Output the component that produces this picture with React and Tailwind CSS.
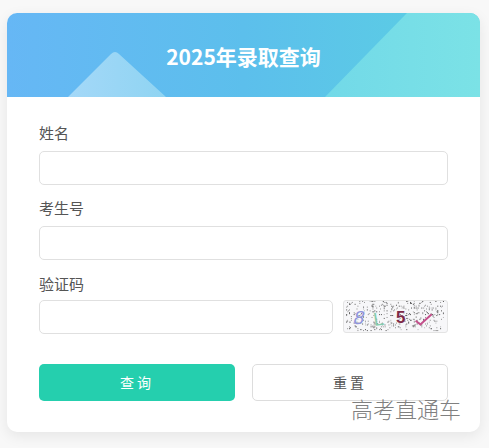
import React from 'react';

const cjk = '"Noto Sans CJK SC", "Liberation Sans", sans-serif';

// fixed pseudo random noise for the captcha picture
const noise = [];
let seed = 7;
for (let i = 0; i < 380; i++) {
  seed = (seed * 7919 + 13) % 10007;
  const x = seed % 104;
  seed = (seed * 7919 + 13) % 10007;
  const y = seed % 32;
  noise.push([x, y]);
}

const Captcha = () => (
  <svg width="105" height="33" viewBox="0 0 105 33" className="block shrink-0 rounded-[3px] border border-[#e4e4e4] bg-[#f7f7f9]">
    {noise.map(([x, y], i) => (
      <rect key={i} x={x} y={y} width="1" height="1" fill={i % 3 === 0 ? '#777777' : '#222222'} opacity={i % 2 === 0 ? 0.85 : 0.55} />
    ))}
    <text x="7" y="25" fontSize="20" fontFamily="Liberation Sans" fill="#8f95dc" transform="skewX(-14) translate(6 0)">8</text>
    <text x="29" y="26" fontSize="20" fontFamily="Liberation Sans" fill="#86cdae" transform="rotate(-8 33 20)">L</text>
    <text x="53" y="23" fontSize="18" fontWeight="bold" fontFamily="Liberation Sans" fill="#7d2a48">5</text>
    <path d="M74 21 L79 25 L91 14" fill="none" stroke="#c4508c" strokeWidth="2.2" />
  </svg>
);

const Field = ({ label, className }) => (
  <div className={className}>
    <label className="block text-[15px] leading-[22px] text-[#555555]">{label}</label>
    <input className="mt-[7px] block h-[34px] w-full rounded-[5px] border border-[#e0e0e0] bg-white" />
  </div>
);

export default function App() {
  return (
    <div className="relative h-[448px] w-[489px] overflow-hidden bg-[#f8f8f8] pt-[13px]" style={{ fontFamily: cjk }}>
      <div className="ml-[7px] h-[419px] w-[473px] overflow-hidden rounded-[10px] bg-white shadow-[0_4px_14px_rgba(0,0,0,0.08)]">
        <div className="relative flex h-[84px] items-center justify-center bg-gradient-to-r from-[#66b7f5] via-[#5cbfec] to-[#5bd0e2]">
          <svg className="absolute inset-0" width="473" height="84" viewBox="0 0 473 84">
            <defs>
              <linearGradient id="peak" x1="0" y1="0" x2="1" y2="0">
                <stop offset="0" stopColor="#a4d8f8" />
                <stop offset="1" stopColor="#8fd4f2" />
              </linearGradient>
              <linearGradient id="slope" x1="0" y1="0" x2="1" y2="0">
                <stop offset="0" stopColor="#72d9e8" />
                <stop offset="1" stopColor="#7be2e6" />
              </linearGradient>
            </defs>
            <path d="M61 84 L104 41 Q108 37 112 41 L159 84 Z" fill="url(#peak)" />
            <polygon points="318,84 400,0 473,0 473,84" fill="url(#slope)" />
          </svg>
          <h1 className="relative mt-[4px] text-[21px] font-bold text-white">2025年录取查询</h1>
        </div>
        <div className="px-[32px] pt-[25px]">
          <Field label="姓名" />
          <Field label="考生号" className="mt-[12px]" />
          <div className="mt-[13px]">
            <label className="block text-[15px] leading-[22px] text-[#555555]">验证码</label>
            <div className="mt-[5px] flex items-start justify-between">
              <input className="block h-[34px] w-[294px] rounded-[5px] border border-[#e0e0e0] bg-white" />
              <Captcha />
            </div>
          </div>
          <div className="mt-[30px] flex justify-between">
            <button className="h-[37px] w-[196px] rounded-[5px] bg-[#25cfae] text-[14px] tracking-[3px] text-white">查询</button>
            <button className="h-[37px] w-[196px] rounded-[5px] border border-[#dddddd] bg-white text-[14px] tracking-[3px] text-[#555555]">重置</button>
          </div>
        </div>
      </div>
      <span className="absolute left-[351px] top-[394px] text-[22px] font-light leading-[28px] text-[#808080]">高考直通车</span>
    </div>
  );
}
